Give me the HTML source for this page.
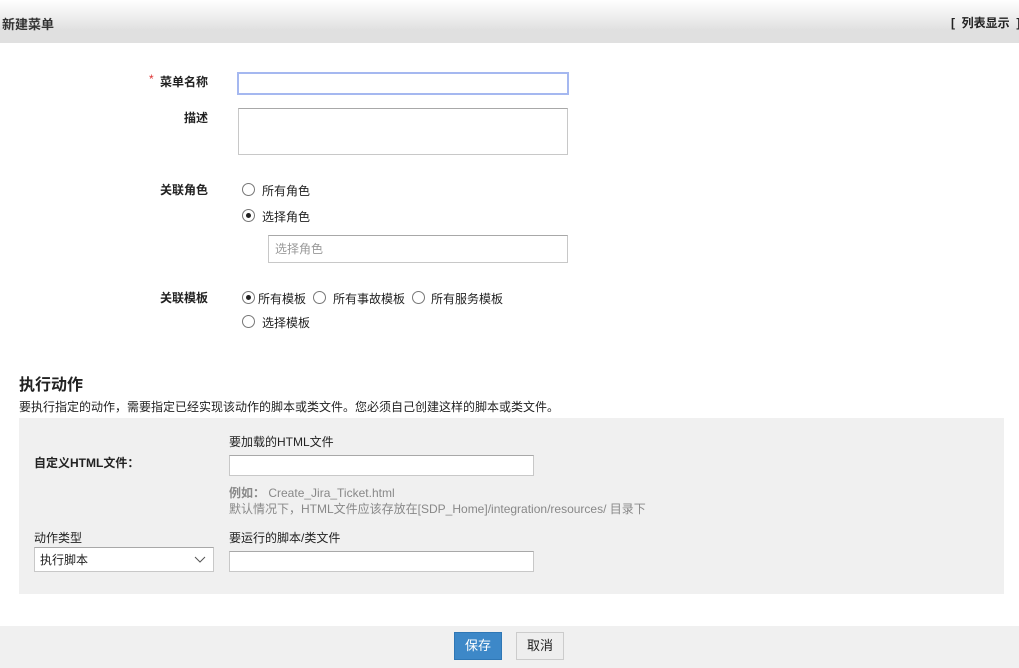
<!DOCTYPE html>
<html><head><meta charset="utf-8"><style>
*{margin:0;padding:0;box-sizing:border-box}
body{width:1019px;height:668px;background:#fff;font-family:"Liberation Sans","Noto Sans CJK SC",sans-serif;font-size:12px;color:#222;position:relative;overflow:hidden}
.a{position:absolute;white-space:nowrap}
.hdr{left:0;top:0;width:1019px;height:43px;background:linear-gradient(#fff,#e0e0e0 70%,#e0e0e0)}
.b{font-weight:bold}
.inp{position:absolute;background:#fff;border:1px solid #c8c8c8;border-top-color:#a8a8a8}
.r{position:absolute;width:13px;height:13px;border:1px solid #777;border-radius:50%;background:#fff}
.r.on::after{content:"";position:absolute;left:3px;top:3px;width:5px;height:5px;border-radius:50%;background:#222}
.g{color:#888}
</style></head><body>
<div class="a hdr"></div>
<div class="a b" style="left:2px;top:14px;font-size:13px;color:#333">新建菜单</div>
<div class="a b" style="left:951px;top:14px;font-size:12px;color:#222">[&nbsp; 列表显示 &nbsp;]</div>

<div class="a" style="left:149px;top:72px;color:#d33">*</div>
<div class="a b" style="left:160px;top:73px">菜单名称</div>
<div class="inp" style="left:237px;top:72px;width:332px;height:23px;border:2px solid #a5b8f0"></div>
<div class="a b" style="left:184px;top:109px">描述</div>
<div class="inp" style="left:238px;top:108px;width:330px;height:47px"></div>

<div class="a b" style="left:160px;top:181px">关联角色</div>
<div class="r" style="left:242px;top:183px"></div><div class="a" style="left:262px;top:182px">所有角色</div>
<div class="r on" style="left:242px;top:209px"></div><div class="a" style="left:262px;top:208px">选择角色</div>
<div class="inp" style="left:268px;top:235px;width:300px;height:28px"></div>
<div class="a g" style="left:275px;top:240px;color:#999">选择角色</div>

<div class="a b" style="left:160px;top:289px">关联模板</div>
<div class="r on" style="left:242px;top:291px"></div><div class="a" style="left:258px;top:290px">所有模板</div>
<div class="r" style="left:313px;top:291px"></div><div class="a" style="left:333px;top:290px">所有事故模板</div>
<div class="r" style="left:412px;top:291px"></div><div class="a" style="left:431px;top:290px">所有服务模板</div>
<div class="r" style="left:242px;top:315px"></div><div class="a" style="left:262px;top:314px">选择模板</div>

<div class="a b" style="left:19px;top:371px;font-size:16px">执行动作</div>
<div class="a" style="left:19px;top:398px">要执行指定的动作，需要指定已经实现该动作的脚本或类文件。您必须自己创建这样的脚本或类文件。</div>
<div class="a" style="left:19px;top:418px;width:985px;height:176px;background:#f0f0f0"></div>
<div class="a" style="left:229px;top:433px">要加载的HTML文件</div>
<div class="a b" style="left:34px;top:454px">自定义HTML文件：</div>
<div class="inp" style="left:229px;top:455px;width:305px;height:21px"></div>
<div class="a g" style="left:229px;top:484px"><b>例如：</b> Create_Jira_Ticket.html</div>
<div class="a g" style="left:229px;top:500px">默认情况下，HTML文件应该存放在[SDP_Home]/integration/resources/ 目录下</div>
<div class="a" style="left:34px;top:529px">动作类型</div>
<div class="a" style="left:229px;top:529px">要运行的脚本/类文件</div>
<div class="inp" style="left:34px;top:547px;width:180px;height:25px"></div>
<div class="a" style="left:40px;top:551px">执行脚本</div>
<svg class="a" style="left:194px;top:554px" width="12" height="10"><path d="M1 3l5 5 5-5" fill="none" stroke="#555" stroke-width="1"/></svg>
<div class="inp" style="left:229px;top:551px;width:305px;height:21px"></div>

<div class="a" style="left:0;top:626px;width:1019px;height:42px;background:#f0f0f0"></div>
<div class="a" style="left:454px;top:632px;width:48px;height:28px;background:#3d88c8;border:1px solid #2f77b5;color:#fff;font-size:13px;text-align:center;line-height:26px">保存</div>
<div class="a" style="left:516px;top:632px;width:48px;height:28px;background:#eee;border:1px solid #ccc;color:#222;font-size:13px;text-align:center;line-height:26px">取消</div>
</body></html>
